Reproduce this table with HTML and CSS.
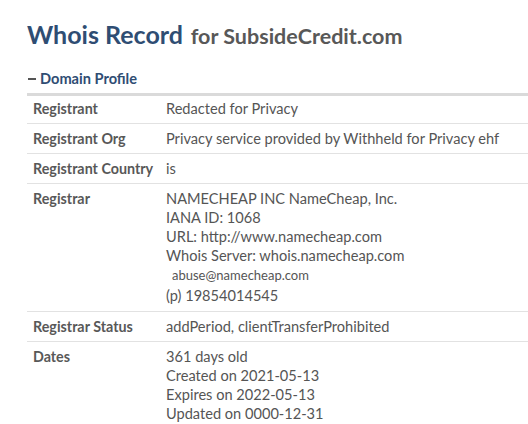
FILE: index.html
```html
<!DOCTYPE html>
<html>
<head>
<meta charset="utf-8">
<link rel="stylesheet" href="styles.css">
</head>
<body>
<div class="page">
  <h1 class="title"><span class="title-main">Whois Record</span> <span class="title-sub">for SubsideCredit.com</span></h1>
  <div class="section-head"><span class="minus"></span>Domain Profile</div>
  <table class="whois">
    <tr class="first"><th>Registrant</th><td>Redacted for Privacy</td></tr>
    <tr><th>Registrant Org</th><td>Privacy service provided by Withheld for Privacy ehf</td></tr>
    <tr><th>Registrant Country</th><td>is</td></tr>
    <tr><th>Registrar</th><td>
      <div>NAMECHEAP INC NameCheap, Inc.</div>
      <div>IANA ID: 1068</div>
      <div>URL: http://www.namecheap.com</div>
      <div>Whois Server: whois.namecheap.com</div>
      <div class="abuse">abuse@namecheap.com</div>
      <div class="phone">(p) 19854014545</div>
    </td></tr>
    <tr><th>Registrar Status</th><td>addPeriod, clientTransferProhibited</td></tr>
    <tr><th>Dates</th><td>
      <div>361 days old</div>
      <div>Created on 2021-05-13</div>
      <div>Expires on 2022-05-13</div>
      <div>Updated on 0000-12-31</div>
    </td></tr>
  </table>
</div>
</body>
</html>
```
FILE: styles.css
```css
html, body {
  margin: 0;
  padding: 0;
  background: #fff;
}
body {
  font-family: Lato, "Open Sans", sans-serif;
  color: #555;
  overflow: hidden;
}
.page {
  padding: 16px 0 0 27px;
}
.title {
  margin: 0;
  font-weight: 700;
  line-height: 32px;
  white-space: nowrap;
}
.title-main {
  font-size: 25px;
  color: #2f4d73;
}
.title-sub {
  font-size: 21.5px;
  color: #585858;
  font-weight: 700;
}
.section-head {
  margin-top: 18px;
  font-size: 14.6px;
  font-weight: 700;
  color: #2f4d73;
  line-height: 18px;
  display: flex;
  align-items: center;
}
.minus {
  display: inline-block;
  width: 8px;
  height: 2.5px;
  background: #555;
  margin: 0 4px 0 1px;
}
.whois {
  border-collapse: collapse;
  table-layout: fixed;
  width: 520px;
  margin-top: 5px;
  border-top: 3px solid #dadada;
  font-size: 14.6px;
  line-height: 19px;
}
.whois th, .whois td {
  text-align: left;
  vertical-align: top;
  padding: 5px 6px 5px 6px;
  border-bottom: 1px solid #e2e2e2;
}
.whois .first th, .whois .first td {
  padding-top: 3px;
}
.whois th {
  width: 121px;
  font-size: 14.3px;
  font-weight: 700;
  color: #585858;
  white-space: nowrap;
}
.whois td {
  font-weight: 400;
  color: #555;
  white-space: nowrap;
}
.abuse {
  font-size: 13px;
  padding-left: 6px;
  line-height: 20px;
}
.phone {
  line-height: 21px;
}
```
